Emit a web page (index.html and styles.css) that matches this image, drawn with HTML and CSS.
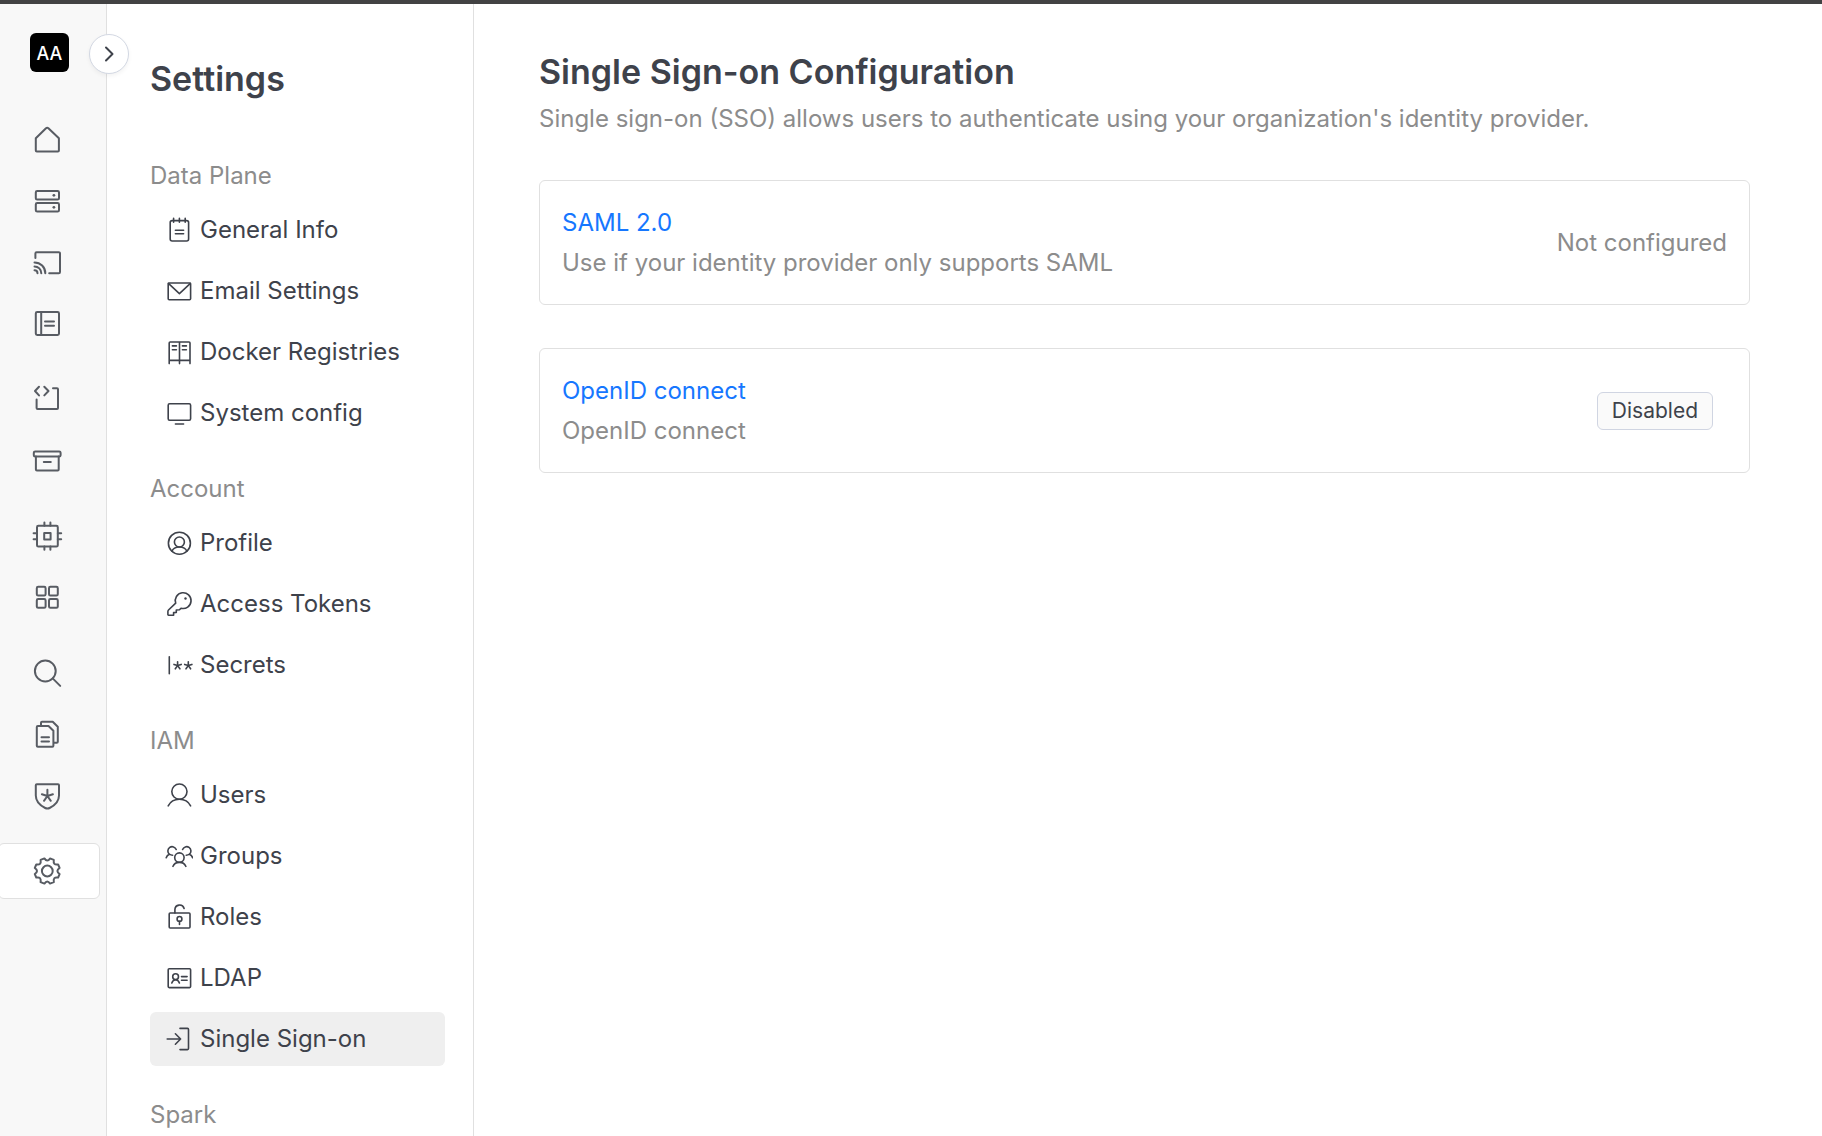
FILE: index.html
```html
<!DOCTYPE html>
<html lang="en">
<head>
<meta charset="utf-8">
<meta name="viewport" content="width=device-width, initial-scale=1">
<title>Single Sign-on Configuration</title>
<link rel="stylesheet" href="styles.css">
</head>
<body>
<div class="app">
  <aside class="rail">
    <a class="avatar" href="#">AA</a>
    <button class="expand" type="button" aria-label="Expand menu">
      <svg viewBox="0 0 20 20" width="20" height="20"><path d="M7 3.500l6.500 6.500-6.500 6.500"/></svg>
    </button>
    <nav class="rail-nav" aria-label="Main">
      <div class="rail-group">
        <a class="rail-item" href="#" aria-label="Home"><svg viewBox="0 0 32 32"><path d="M15 4.200q1.200-1 2.400 0L27.900 14.300V26.400a1 1 0 0 1-1 1H5.800a1 1 0 0 1-1-1V14.300z"/></svg></a>
        <a class="rail-item" href="#" aria-label="Clusters"><svg viewBox="0 0 32 32"><rect x="4.800" y="6" width="23.200" height="8.600" rx="1.400"/><rect x="4.800" y="18" width="23.200" height="8.600" rx="1.400"/><circle class="dot" cx="22.900" cy="10.300" r="1.400"/><circle class="dot" cx="22.900" cy="22.300" r="1.400"/></svg></a>
        <a class="rail-item" href="#" aria-label="Sessions"><svg viewBox="0 0 32 32"><path d="M4.400 12V7.400a1.200 1.200 0 0 1 1.200-1.200H27.800a1.200 1.200 0 0 1 1.200 1.200V26a1.200 1.200 0 0 1-1.200 1.200H18.200M3.500 16.400a10.800 10.800 0 0 1 10.800 10.800M3.500 20.400a6.800 6.800 0 0 1 6.800 6.800M3.500 24.200a3 3 0 0 1 3 3"/></svg></a>
        <a class="rail-item" href="#" aria-label="Notebooks"><svg viewBox="0 0 32 32"><rect x="4.800" y="5" width="23.200" height="23" rx="1.400"/><path d="M10.200 5v23M14 14.600h9M14 18.800h9"/></svg></a>
      </div>
      <div class="rail-group">
        <a class="rail-item" href="#" aria-label="Jobs"><svg viewBox="0 0 32 32"><path d="M8 3.800 4 8l4 4.400M13.300 3.800l4.200 4.200-4.200 4.400M22 5.200h4a1 1 0 0 1 1 1V25a1 1 0 0 1-1 1H6.600a1 1 0 0 1-1-1V16.500"/></svg></a>
        <a class="rail-item" href="#" aria-label="Archive"><svg viewBox="0 0 32 32"><rect x="2.800" y="7.400" width="26.800" height="5.200" rx="1.400"/><path d="M4.900 12.600v13a1 1 0 0 0 1 1h20.800a1 1 0 0 0 1-1v-13M12.800 18h7"/></svg></a>
      </div>
      <div class="rail-group">
        <a class="rail-item" href="#" aria-label="Compute"><svg viewBox="0 0 32 32"><rect x="6" y="5.800" width="20.800" height="20.800" rx="1.400"/><rect x="13.200" y="13" width="6.400" height="6.400"/><path d="M13.400 5.800V2.600M19.400 5.800V2.600M13.400 26.600v3.200M19.400 26.600v3.200M6 13.200H2.600M6 19.200H2.600M26.800 13.200h3.400M26.800 19.200h3.400"/></svg></a>
        <a class="rail-item" href="#" aria-label="Apps"><svg viewBox="0 0 32 32"><rect x="5.800" y="5.800" width="8.800" height="8.800" rx="1.400"/><rect x="18" y="5.800" width="8.800" height="8.800" rx="1.400"/><rect x="5.800" y="18" width="8.800" height="8.800" rx="1.400"/><rect x="18" y="18" width="8.800" height="8.800" rx="1.400"/></svg></a>
      </div>
      <div class="rail-group">
        <a class="rail-item" href="#" aria-label="Search"><svg viewBox="0 0 32 32"><circle cx="14.300" cy="14" r="10.400"/><path d="M21.700 21.400l7.500 7.500"/></svg></a>
        <a class="rail-item" href="#" aria-label="Documents"><svg viewBox="0 0 32 32"><path d="M6.800 8h10.700l4.900 4.800v14.900a1 1 0 0 1-1 1H6.800a1 1 0 0 1-1-1V9a1 1 0 0 1 1-1zM10 8V4.700a1 1 0 0 1 1-1h10.700l5.100 5.100V23.700a1 1 0 0 1-1 1h-3.400M10.500 19.200h7.500M10.500 23.400h7.500"/></svg></a>
        <a class="rail-item" href="#" aria-label="Security"><svg viewBox="0 0 32 32"><path d="M5.800 5.200h21.200a1 1 0 0 1 1 1v10.300c0 7-6 10.800-9.400 12.500q-2.200 1.200-4.400 0C10.800 27.300 4.800 23.500 4.800 16.500V6.200a1 1 0 0 1 1-1zM16.400 17V10.800M16.400 17l5.500-1.800M16.400 17l3.400 4.800M16.400 17l-3.400 4.800M16.400 17l-5.500-1.800"/></svg></a>
      </div>
      <div class="rail-group">
        <a class="rail-item active" href="#" aria-label="Settings" aria-current="page"><svg viewBox="0 0 32 32"><circle cx="16.300" cy="16" r="5.400"/><path d="M28.600 19 27.100 22.600Q21.900 21.500 22.800 27.100L19 28.600Q16.300 24.200 13.400 28.600L9.600 27.100Q10.500 21.500 5.300 22.600L3.800 19Q8.200 16 3.800 13L5.300 9.400Q10.500 10.500 9.600 4.900L13.400 3.400Q16.300 7.800 19 3.400L22.800 4.900Q21.900 10.500 27.100 9.400L28.600 13Q24.200 16 28.600 19z"/></svg></a>
      </div>
    </nav>
  </aside>

  <aside class="settings">
    <h2 class="settings-title">Settings</h2>
    <nav class="menu" aria-label="Settings">
      <section class="menu-group">
        <h3 class="menu-label">Data Plane</h3>
        <a class="menu-item" href="#"><svg viewBox="0 0 28 28"><rect x="5.200" y="4.600" width="18.400" height="20.400" rx="2"/><path d="M8.600 2.200v4M14.400 2.200v4M20.200 2.200v4M10.400 14.300h8.200M10.400 17.800h8.200"/></svg>General Info</a>
        <a class="menu-item" href="#"><svg viewBox="0 0 28 28"><rect x="3.200" y="6" width="22.400" height="16.800" rx="1"/><path d="M3.400 6.400l11 10.200 11-10.200"/></svg>Email Settings</a>
        <a class="menu-item" href="#"><svg viewBox="0 0 28 28"><path d="M4.200 25.600V5a1 1 0 0 1 1-1H24a1 1 0 0 1 1 1v20.600M4.200 22.400H25M14.500 4v21.600M7.400 7.900h4M7.400 11.800h4M17.400 7.900h4M17.400 11.800h4"/></svg>Docker Registries</a>
        <a class="menu-item" href="#"><svg viewBox="0 0 28 28"><rect x="3.200" y="4.800" width="22.400" height="16.400" rx="1.400"/><path d="M10.400 25h8.200"/></svg>System config</a>
      </section>
      <section class="menu-group">
        <h3 class="menu-label">Account</h3>
        <a class="menu-item" href="#"><svg viewBox="0 0 28 28"><circle cx="14.400" cy="14.200" r="11"/><circle cx="14.400" cy="13" r="5"/><path d="M7 22.200c2-5.600 12.800-5.600 14.800 0"/></svg>Profile</a>
        <a class="menu-item" href="#"><svg viewBox="0 0 28 28"><path d="M10.700 13.200A7.900 7.900 0 1 1 16 18.200l-1.500 1.600-3.200.2v2.400l-2.700.2v2.600H3.500a.6.6 0 0 1-.6-.6v-3.200a2 2 0 0 1 .6-1.400z"/><circle class="dot" cx="20.500" cy="8.500" r="1.200"/></svg>Access Tokens</a>
        <a class="menu-item" href="#"><svg viewBox="0 0 28 28"><path d="M4.300 5.700v17M12.600 14.600V10.800M12.600 14.600l3.600-1.200M12.600 14.600l2.300 3.200M12.600 14.600l-2.300 3.200M12.600 14.600L9 13.400M23.300 14.600V10.800M23.300 14.600l3.600-1.200M23.300 14.600l2.300 3.200M23.300 14.600l-2.300 3.200M23.300 14.600l-3.600-1.200"/></svg>Secrets</a>
      </section>
      <section class="menu-group">
        <h3 class="menu-label">IAM</h3>
        <a class="menu-item" href="#"><svg viewBox="0 0 28 28"><circle cx="14.400" cy="10.600" r="7.600"/><path d="M3.200 24.800c4.400-8.800 18-8.800 22.400 0"/></svg>Users</a>
        <a class="menu-item" href="#"><svg viewBox="0 0 28 28"><circle cx="14.400" cy="15.600" r="4.700"/><path d="M8 24.300c2.200-5.200 10.600-5.200 12.800 0M11.200 7.500A4.300 4.300 0 1 0 4.300 12.200Q2 13.200 1.200 15.700M4.300 12.200Q5.800 13.200 7.600 13.200M17.600 7.500A4.300 4.300 0 1 1 24.500 12.200Q26.800 13.200 27.600 15.700M24.500 12.200Q23 13.200 21.200 13.200"/></svg>Groups</a>
        <a class="menu-item" href="#"><svg viewBox="0 0 28 28"><rect x="4.200" y="10" width="20.800" height="15" rx="1"/><path d="M9.900 10V6.600a4.700 4.700 0 0 1 9.200-1.200M14.500 18.400v3"/><circle cx="14.500" cy="15.900" r="2.400"/></svg>Roles</a>
        <a class="menu-item" href="#"><svg viewBox="0 0 28 28"><rect x="3.200" y="4.800" width="22.400" height="18.800" rx="1"/><circle cx="10.600" cy="12.700" r="2.900"/><path d="M6.800 19c1.400-4.400 6.200-4.400 7.600 0M16.500 12.600h5.600M16.500 16.200h5.600"/></svg>LDAP</a>
        <a class="menu-item active" href="#" aria-current="page"><svg viewBox="0 0 28 28"><path d="M15 3.400h7.500a1 1 0 0 1 1 1v19.200a1 1 0 0 1-1 1H15M2.200 14h13.400M10.400 8.800l5.200 5.200-5.200 5.200"/></svg>Single Sign-on</a>
      </section>
      <section class="menu-group">
        <h3 class="menu-label">Spark</h3>
      </section>
    </nav>
  </aside>

  <main class="content">
    <h1 class="title">Single Sign-on Configuration</h1>
    <p class="subtitle">Single sign-on (SSO) allows users to authenticate using your organization's identity provider.</p>
    <div class="cards">
      <article class="card">
        <div>
          <a class="card-link" href="#">SAML 2.0</a>
          <p class="card-text">Use if your identity provider only supports SAML</p>
        </div>
        <span class="card-status">Not configured</span>
      </article>
      <article class="card">
        <div>
          <a class="card-link" href="#">OpenID connect</a>
          <p class="card-text">OpenID connect</p>
        </div>
        <span class="tag">Disabled</span>
      </article>
    </div>
  </main>
</div>
</body>
</html>
```
FILE: styles.css
```css
* {
  box-sizing: border-box;
}

body {
  margin: 0;
  background: #fff;
  color: #3e424b;
  font-family: Inter, "Liberation Sans", sans-serif;
  font-size: 24px;
  line-height: 30px;
}

h1, h2, h3, p {
  margin: 0;
  font-weight: 400;
}

a {
  color: inherit;
  text-decoration: none;
}

svg {
  display: block;
  flex: none;
  fill: none;
  stroke: currentColor;
  stroke-linecap: round;
  stroke-linejoin: round;
}

.dot {
  fill: currentColor;
  stroke: none;
}

.app {
  display: flex;
  height: 100vh;
  overflow: hidden;
  border-top: 4px solid #424243;
}

/* Icon rail */
.rail {
  position: relative;
  flex: none;
  width: 107px;
  padding-top: 29px;
  background: #f8f8f8;
  border-right: 1px solid #e0e0e0;
}

.avatar {
  display: flex;
  align-items: center;
  justify-content: center;
  width: 39px;
  height: 39px;
  margin-left: 30px;
  padding-top: 2px;
  border-radius: 6px;
  background: #000;
  color: #fff;
  font-size: 18px;
  font-weight: 500;
}

.expand {
  position: absolute;
  top: 30px;
  right: -23px;
  display: flex;
  align-items: center;
  justify-content: center;
  width: 40px;
  height: 40px;
  padding: 0;
  border: 1px solid #d3d8e3;
  border-radius: 50%;
  background: #fff;
  color: #3e424b;
  box-shadow: 0 2px 4px rgba(0, 0, 0, 0.05);
}

.expand svg {
  stroke-width: 2;
}

.rail-nav {
  display: flex;
  flex-direction: column;
  gap: 20px;
  margin-top: 40px;
}

.rail-group {
  display: flex;
  flex-direction: column;
  gap: 5px;
}

.rail-item {
  display: flex;
  align-items: center;
  justify-content: center;
  height: 56px;
  margin: 0 6px 0 -2px;
  padding-right: 4px;
  border: 1px solid transparent;
  border-radius: 6px;
  color: #585c63;
}

.rail-item.active {
  border-color: #e0e0e0;
  background: #fff;
}

.rail-item svg {
  width: 32px;
  height: 32px;
  stroke-width: 2;
}

/* Settings menu */
.settings {
  flex: none;
  width: 367px;
  padding: 52px 28px 0 43px;
  border-right: 1px solid #e0e0e0;
}

.settings-title,
.title {
  font-size: 34px;
  font-weight: 600;
  line-height: 46px;
}

.menu {
  display: flex;
  flex-direction: column;
  gap: 34px;
  margin-top: 59px;
}

.menu-group {
  display: flex;
  flex-direction: column;
  gap: 7px;
}

.menu-label {
  margin-bottom: 5px;
  color: #8c8c8c;
  font-size: 24px;
}

.menu-item {
  display: flex;
  align-items: center;
  gap: 7px;
  height: 54px;
  padding-left: 15px;
  border-radius: 6px;
  white-space: nowrap;
}

.menu-item.active {
  background: #efefef;
}

.menu-item svg {
  width: 28px;
  height: 28px;
  stroke-width: 1.6;
}

/* Page content */
.content {
  flex: 1;
  min-width: 0;
  padding: 45px 72px 0 65px;
}

.subtitle,
.card-text,
.card-status {
  color: #8c8c8c;
}

.subtitle {
  margin-top: 9px;
}

.cards {
  display: flex;
  flex-direction: column;
  gap: 43px;
  margin-top: 46px;
}

.card {
  display: flex;
  align-items: center;
  justify-content: space-between;
  height: 125px;
  padding: 0 22px;
  border: 1px solid #e0e0e0;
  border-radius: 6px;
}

.card-link {
  display: block;
  color: #1677ff;
}

.card-text {
  margin-top: 10px;
}

.tag {
  margin-right: 14px;
  padding: 3px 14px;
  border: 1px solid #d0d5e2;
  border-radius: 6px;
  background: #fafafa;
  font-size: 21px;
}
```
